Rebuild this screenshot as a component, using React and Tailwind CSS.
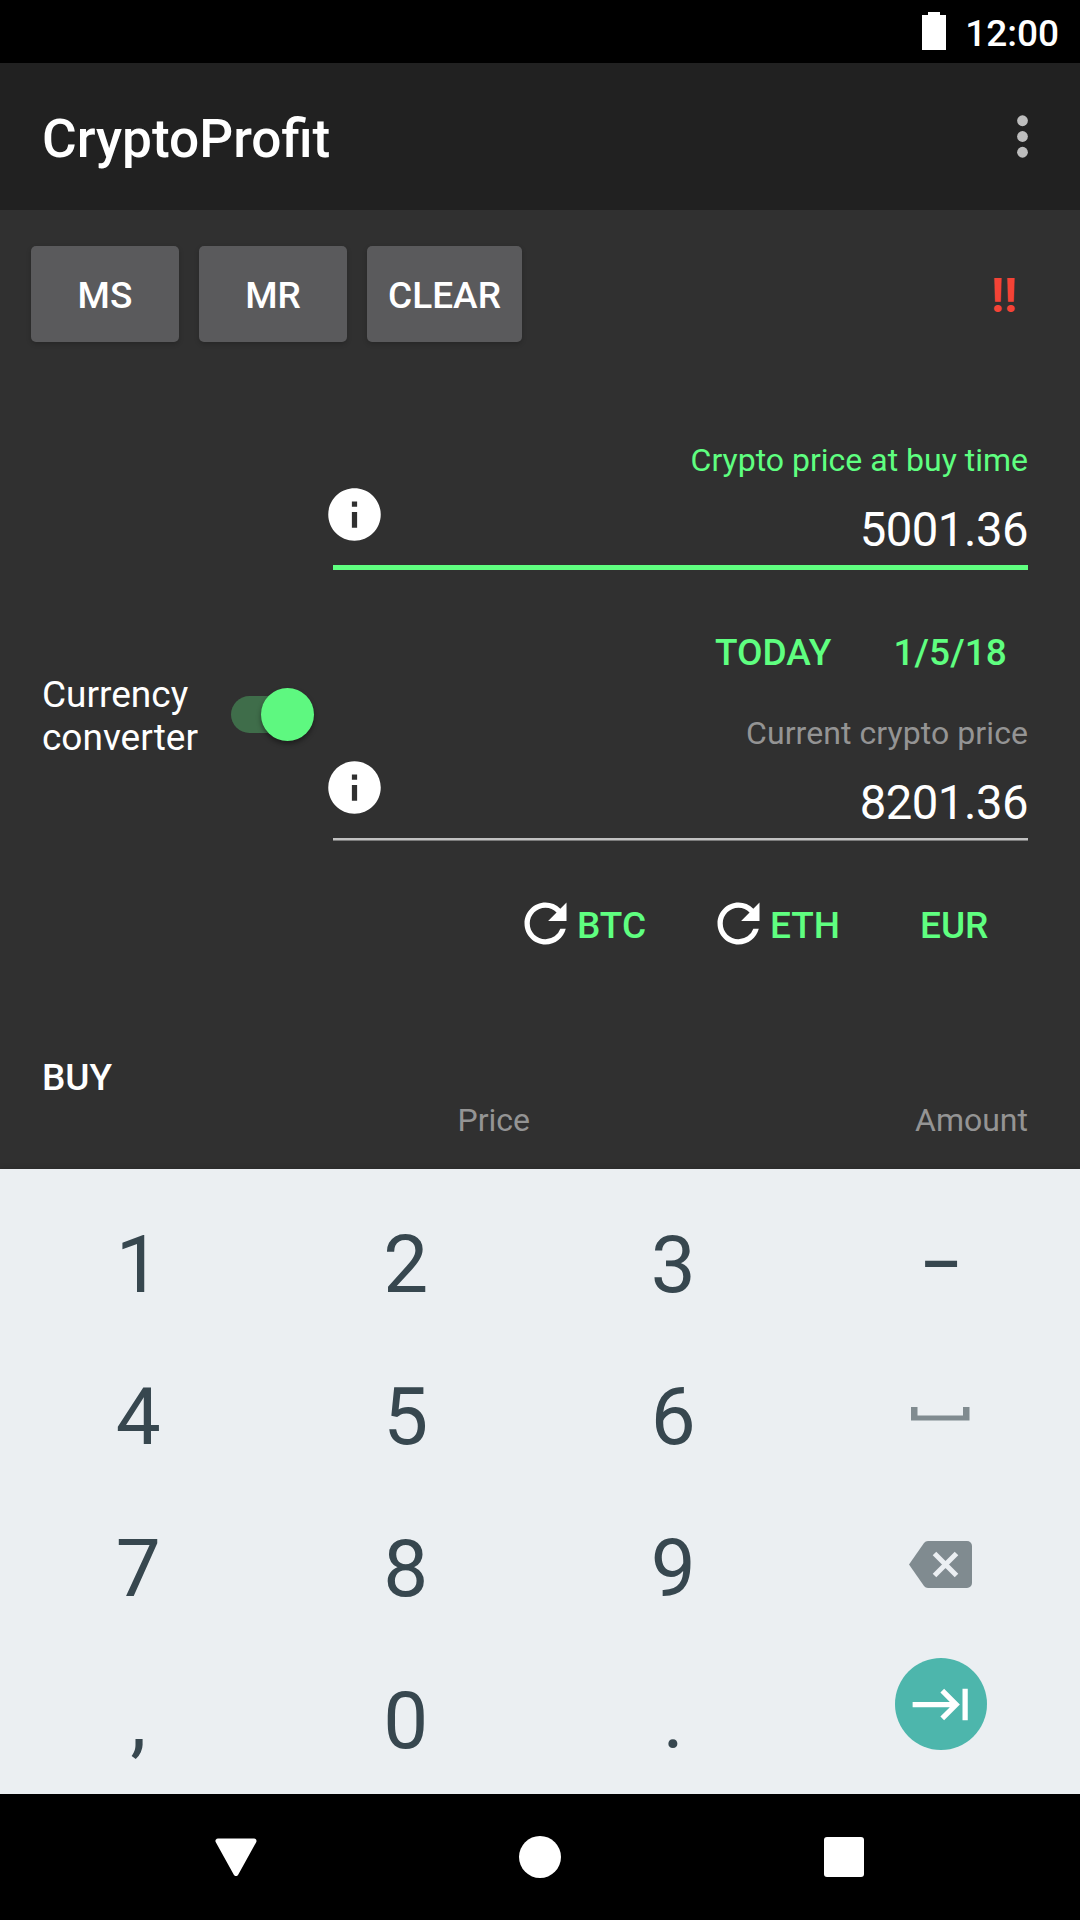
import React from "react";

const REFRESH =
  "M17.65 6.35A7.958 7.958 0 0 0 12 4c-4.42 0-7.99 3.58-7.99 8s3.57 8 7.99 8c3.73 0 6.84-2.55 7.73-6h-2.08A5.99 5.99 0 0 1 12 18c-3.31 0-6-2.69-6-6s2.69-6 6-6c1.66 0 3.14.69 4.22 1.78L13 11h7V4l-2.35 2.35z";
const INFO =
  "M12 2C6.48 2 2 6.48 2 12s4.48 10 10 10 10-4.48 10-10S17.52 2 12 2zm1 15h-2v-6h2v6zm0-8h-2V7h2v2z";
const TAB =
  "M11.59 7.41L15.17 11H1v2h14.17l-3.59 3.59L13 18l6-6-6-6-1.41 1.41zM20 6v12h2V6h-2z";

function Icon({ d, className }) {
  return (
    <svg viewBox="0 0 24 24" fill="currentColor" className={className}>
      <path d={d} />
    </svg>
  );
}

function StatusBar() {
  return (
    <div className="flex h-[63px] items-start justify-end bg-black pr-[21px] text-white">
      <svg viewBox="0 0 24 38" fill="currentColor" className="mt-[12px] h-[38px] w-[24px]">
        <path d="M0 3h6V0h12v3h6v35H0z" />
      </svg>
      <span className="ml-[19px] mt-[12px] text-[37px] leading-[43px] font-medium">12:00</span>
    </div>
  );
}

function AppBar() {
  return (
    <header className="flex h-[147px] items-center justify-between bg-[#212121] pl-[42px] pr-[26px] text-white">
      <h1 className="pt-[4px] text-[53.2px] leading-[62px] font-medium">CryptoProfit</h1>
      <svg viewBox="0 0 24 24" fill="#bdbdbd" className="h-[63px] w-[63px]">
        <circle cx="12" cy="6" r="2.05" />
        <circle cx="12" cy="12" r="2.05" />
        <circle cx="12" cy="18" r="2.05" />
      </svg>
    </header>
  );
}

function RaisedButton({ children, className }) {
  return (
    <button
      className={
        "flex h-[96px] items-center justify-center rounded-[5px] bg-[#5a5a5c] pt-[3px] text-[37px] font-medium text-white shadow-[0_2px_5px_rgba(0,0,0,0.2)] " +
        className
      }
    >
      {children}
    </button>
  );
}

function PriceField({ label, value, active }) {
  return (
    <div className="w-[695px]">
      <div
        className={
          "h-[42px] text-right text-[32px] leading-[38px] " +
          (active ? "text-[#5fff80]" : "tracking-[0.07px] text-[#949494]")
        }
      >
        {label}
      </div>
      <div className="flex h-[82px] justify-between">
        <Icon d={INFO} className="-ml-[10px] h-[63px] w-[63px] text-white" />
        <span className="mt-[17px] text-[47.25px] leading-[60px] tracking-[-0.5px] text-white">
          {value}
        </span>
      </div>
      <div
        className={
          active ? "h-[5px] bg-[#5fff80]" : "h-[3px] border-b border-[#7c7c7c] bg-[#c1c1c1]"
        }
      />
    </div>
  );
}

function FlatButton({ children, icon, className }) {
  return (
    <button
      className={
        "flex h-full items-center text-[37px] font-medium text-[#5fff80] " + className
      }
    >
      {icon && <Icon d={REFRESH} className="-mt-[4px] h-[63px] w-[63px] shrink-0 text-white" />}
      <span>{children}</span>
    </button>
  );
}

function Switch() {
  return (
    <div className="relative -mt-[3px] h-[53px] w-[83px]">
      <div className="absolute top-[8px] left-0 h-[37px] w-[78px] rounded-full bg-[#3f6d4a]" />
      <div className="absolute top-0 left-[30px] h-[53px] w-[53px] rounded-full bg-[#5ef880] shadow-[0_3px_5px_rgba(0,0,0,0.4)]" />
    </div>
  );
}

function Converter() {
  return (
    <section className="flex h-[658px]">
      <div className="mt-[331px] flex h-[86px] w-[333px] items-center pl-[42px]">
        <div className="w-[189px] text-[37px] leading-[43px] text-white">
          Currency
          <br />
          converter
        </div>
        <Switch />
      </div>
      <div className="w-[695px] pt-[99px]">
        <PriceField label="Crypto price at buy time" value="5001.36" active />
        <div className="flex h-[144px] items-center justify-end gap-[62px] pt-[21px] pr-[21px]">
          <FlatButton>TODAY</FlatButton>
          <FlatButton className="tracking-[0.1px]">1/5/18</FlatButton>
        </div>
        <PriceField label="Current crypto price" value="8201.36" />
        <div className="flex h-[169px] items-center">
          <FlatButton icon className="ml-[181px] w-[193px]">BTC</FlatButton>
          <FlatButton icon className="w-[213px]">ETH</FlatButton>
          <FlatButton>EUR</FlatButton>
        </div>
      </div>
    </section>
  );
}

function BuySection() {
  return (
    <section className="pl-[42px] pr-[52px]">
      <h2 className="mt-[56px] text-[37px] leading-[43px] font-medium text-white">BUY</h2>
      <div className="flex pt-[2px] text-[32px] leading-[38px] text-[#949494]">
        <span className="w-[488px] text-right">Price</span>
        <span className="w-[498px] text-right">Amount</span>
      </div>
    </section>
  );
}

function Key({ children }) {
  return <div className="flex h-[152px] items-center justify-center">{children}</div>;
}

function Keyboard() {
  return (
    <div className="relative grid h-[625px] grid-cols-[repeat(4,267.5px)] content-start bg-[#ebeff2] pl-[4.5px] pt-[20px] text-[80px] leading-[80px] text-[#37474f] shadow-[0_-1px_5px_rgba(0,0,0,0.15)]">
      <Key>1</Key>
      <Key>2</Key>
      <Key>3</Key>
      <Key>
        <span className="pt-px text-[64px] font-medium">–</span>
      </Key>
      <Key>4</Key>
      <Key>5</Key>
      <Key>6</Key>
      <Key>
        <svg viewBox="0 0 59 14" fill="#808b90" className="-mt-[7px] h-[14px] w-[59px]">
          <path d="M0 0h6.5v8.5h45.5V0h6.5v13.5H0z" />
        </svg>
      </Key>
      <Key>7</Key>
      <Key>8</Key>
      <Key>9</Key>
      <Key>
        <svg viewBox="0 0 63 47" className="-mt-[9px] h-[47px] w-[63px]">
          <path
            d="M19 0H58a5 5 0 0 1 5 5V42a5 5 0 0 1-5 5H19q-2.500 0-4-2L0 23.500 15 2q1.500-2 4-2z"
            fill="#808b90"
          />
          <path d="M25.500 12.500L47.500 34.500M47.500 12.500L25.500 34.500" stroke="#ebeff2" strokeWidth="5" />
        </svg>
      </Key>
      <Key>,</Key>
      <Key>0</Key>
      <Key>.</Key>
      <Key>
        <div className="-mt-[34px] flex h-[92px] w-[92px] items-center justify-center rounded-full bg-[#4db6ac]">
          <Icon d={TAB} className="ml-[2px] h-[63px] w-[63px] text-white" />
        </div>
      </Key>
    </div>
  );
}

function NavBar() {
  return (
    <nav className="flex h-[126px] items-center justify-between bg-black pl-[215px] pr-[216px]">
      <svg viewBox="0 0 42 38" className="h-[38px] w-[42px]">
        <path
          d="M3 3H39L21 35.500z"
          fill="#fff"
          stroke="#fff"
          strokeWidth="5"
          strokeLinejoin="round"
        />
      </svg>
      <div className="mr-[2px] h-[42px] w-[42px] rounded-full bg-white" />
      <div className="h-[40px] w-[40px] rounded-[3px] bg-white" />
    </nav>
  );
}

export default function App() {
  return (
    <div className="h-[1920px] w-[1080px] overflow-hidden bg-[#303030] font-['Roboto',sans-serif]">
      <StatusBar />
      <AppBar />
      <main className="h-[959px] overflow-hidden">
        <div className="flex items-center gap-[20px] pt-[36px] pr-[63px] pl-[31px]">
          <RaisedButton className="w-[148px]">MS</RaisedButton>
          <RaisedButton className="w-[148px]">MR</RaisedButton>
          <RaisedButton className="w-[155px]">CLEAR</RaisedButton>
          <span className="ml-auto pt-[4px] text-[48px] leading-[56px] font-bold text-[#f44336]">!!</span>
        </div>
        <Converter />
        <BuySection />
      </main>
      <Keyboard />
      <NavBar />
    </div>
  );
}
